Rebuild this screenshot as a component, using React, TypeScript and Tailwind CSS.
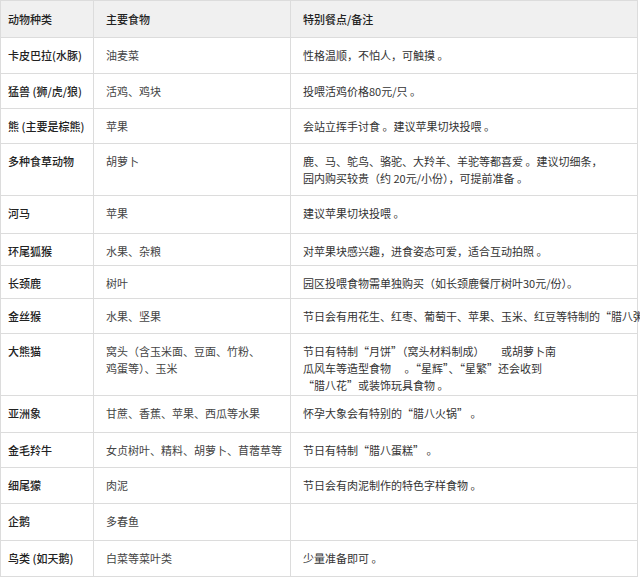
import React from 'react';

const rows: [string, React.ReactNode, React.ReactNode, number][] = [
  ['卡皮巴拉(水豚)', '油麦菜', '性格温顺，不怕人，可触摸 。', 36],
  ['猛兽 (狮/虎/狼)', '活鸡、鸡块', '投喂活鸡价格80元/只 。', 35],
  ['熊 (主要是棕熊)', '苹果', '会站立挥手讨食 。建议苹果切块投喂 。', 35],
  ['多种食草动物', '胡萝卜', <>鹿、马、鸵鸟、骆驼、大羚羊、羊驼等都喜爱 。建议切细条，<br />园内购买较贵（约 20元/小份），可提前准备 。</>, 52],
  ['河马', '苹果', '建议苹果切块投喂 。', 38],
  ['环尾狐猴', '水果、杂粮', '对苹果块感兴趣，进食姿态可爱，适合互动拍照 。', 32],
  ['长颈鹿', '树叶', '园区投喂食物需单独购买（如长颈鹿餐厅树叶30元/份）。', 33],
  ['金丝猴', '水果、坚果', '节日会有用花生、红枣、葡萄干、苹果、玉米、红豆等特制的“腊八粥”。', 35],
  ['大熊猫', <>窝头（含玉米面、豆面、竹粉、<br />鸡蛋等）、玉米</>, <>节日有特制“月饼”（窝头材料制成）　　或胡萝卜南<br />瓜风车等造型食物　 。“星辉”、“星繁”还会收到<br />“腊八花”或装饰玩具食物 。</>, 62],
  ['亚洲象', '甘蔗、香蕉、苹果、西瓜等水果', '怀孕大象会有特别的“腊八火锅” 。', 37],
  ['金毛羚牛', '女贞树叶、精料、胡萝卜、苜蓿草等', '节日有特制“腊八蛋糕” 。', 35],
  ['细尾獴', '肉泥', '节日会有肉泥制作的特色字样食物 。', 36],
  ['企鹅', '多春鱼', '', 37],
  ['鸟类 (如天鹅)', '白菜等菜叶类', '少量准备即可 。', 36],
];

export default function App() {
  return (
    <div className="w-[640px] h-[580px] overflow-hidden bg-white text-[11px] leading-[17px] text-[#222]" style={{ fontFamily: '"Noto Sans CJK SC", "Liberation Sans", sans-serif' }}>
      <table className="w-[638px] table-fixed border-collapse border border-[#c8c8c8] whitespace-nowrap">
        <colgroup>
          <col className="w-[93px]" />
          <col className="w-[197px]" />
          <col />
        </colgroup>
        <thead>
          <tr className="h-[37px] bg-[#f0f0f0] text-left">
            <th className="px-[7px] font-medium border border-[#dcdcdc]">动物种类</th>
            <th className="px-[12px] font-medium border border-[#dcdcdc]">主要食物</th>
            <th className="px-[12px] font-medium border border-[#dcdcdc]">特别餐点/备注</th>
          </tr>
        </thead>
        <tbody>
          {rows.map(([a, b, c, h], i) => (
            <tr key={i} style={{ height: h }}>
              <td className="px-[7px] pt-[9px] pb-0 align-top font-medium border border-[#dcdcdc]">{a}</td>
              <td className="px-[12px] pt-[9px] pb-0 align-top text-[#444] border border-[#dcdcdc]">{b}</td>
              <td className="px-[12px] pt-[9px] pb-0 align-top text-[#333] border border-[#dcdcdc]">{c}</td>
            </tr>
          ))}
        </tbody>
      </table>
    </div>
  );
}
